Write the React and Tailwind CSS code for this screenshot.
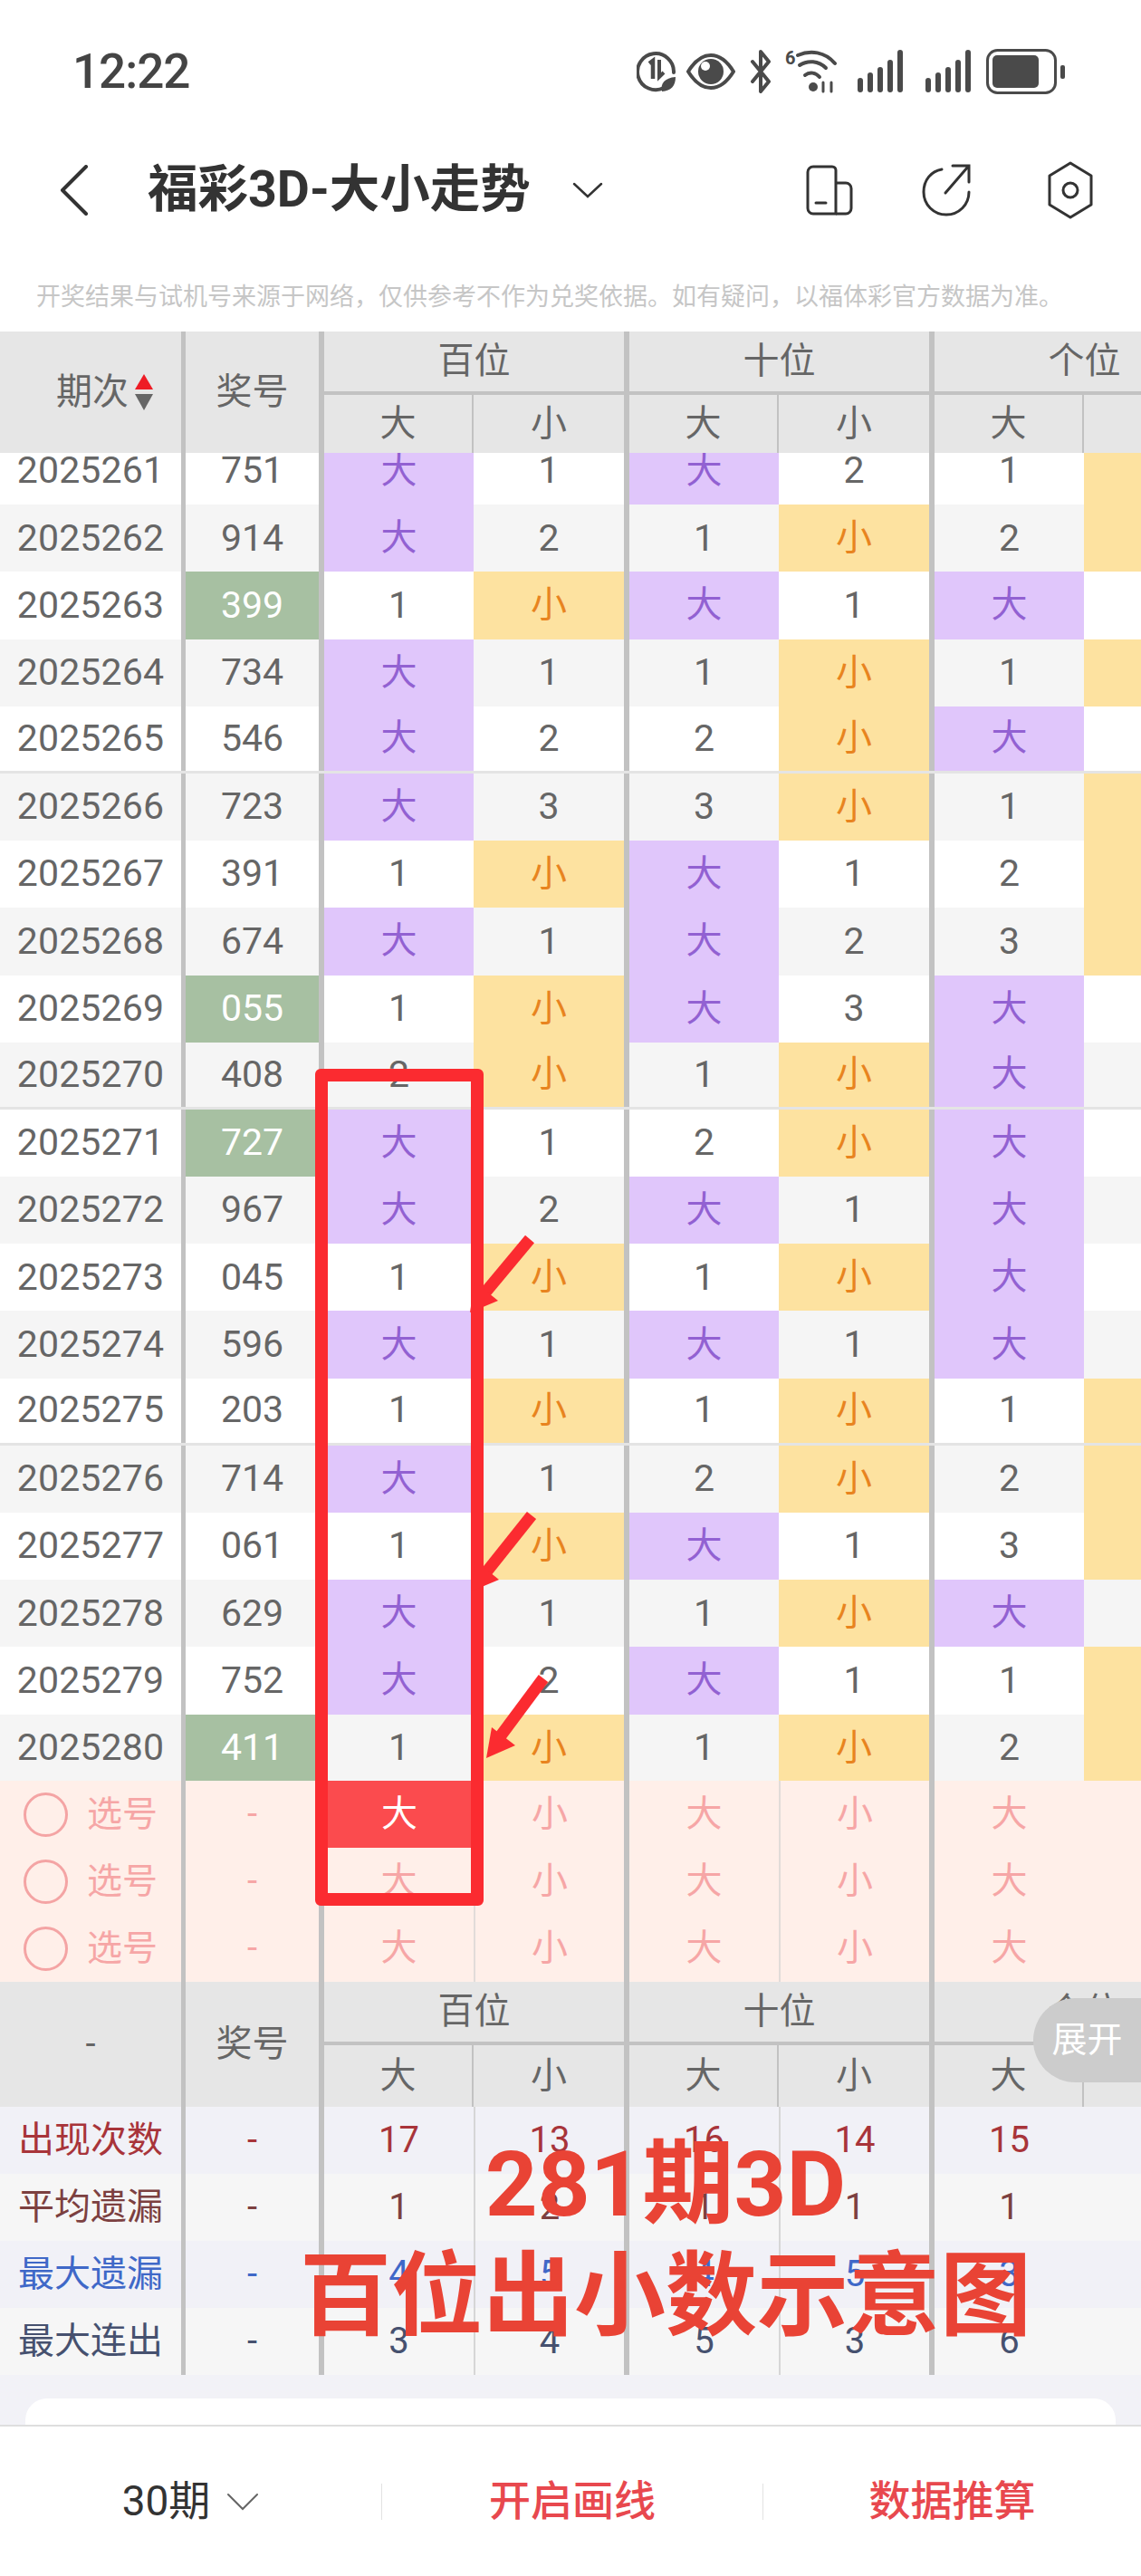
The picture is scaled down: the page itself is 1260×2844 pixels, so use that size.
const cjk = "font-['Roboto','Noto_Sans_CJK_SC',sans-serif]";

// big/small columns: number = miss count, "d" = 大, "x" = 小
const draws = [
  ["2025261", "751", 0, "d", 1, "d", 2, 1],
  ["2025262", "914", 0, "d", 2, 1, "x", 2],
  ["2025263", "399", 1, 1, "x", "d", 1, "d"],
  ["2025264", "734", 0, "d", 1, 1, "x", 1],
  ["2025265", "546", 0, "d", 2, 2, "x", "d"],
  ["2025266", "723", 0, "d", 3, 3, "x", 1],
  ["2025267", "391", 0, 1, "x", "d", 1, 2],
  ["2025268", "674", 0, "d", 1, "d", 2, 3],
  ["2025269", "055", 1, 1, "x", "d", 3, "d"],
  ["2025270", "408", 0, 2, "x", 1, "x", "d"],
  ["2025271", "727", 1, "d", 1, 2, "x", "d"],
  ["2025272", "967", 0, "d", 2, "d", 1, "d"],
  ["2025273", "045", 0, 1, "x", 1, "x", "d"],
  ["2025274", "596", 0, "d", 1, "d", 1, "d"],
  ["2025275", "203", 0, 1, "x", 1, "x", 1],
  ["2025276", "714", 0, "d", 1, 2, "x", 2],
  ["2025277", "061", 0, 1, "x", "d", 1, 3],
  ["2025278", "629", 0, "d", 1, 1, "x", "d"],
  ["2025279", "752", 0, "d", 2, "d", 1, 1],
  ["2025280", "411", 1, 1, "x", 1, "x", 2],
];

const stats = [
  ["出现次数", "text-[#a8343a]", "bg-[#f1f1f7]", [17, 13, 16, 14, 15]],
  ["平均遗漏", "text-[#7c4040]", "bg-[#f6f6f6]", [1, 2, 1, 1, 1]],
  ["最大遗漏", "text-[#3f68c8]", "bg-[#f1f1f7]", [4, 5, 4, 5, 3]],
  ["最大连出", "text-[#46516f]", "bg-[#f6f6f6]", [3, 4, 5, 3, 6]],
];

const widths = ["w-[165px]", "w-[166px]", "w-[165px]", "w-[166px]", "w-[165px]", "w-[63px]"];
const seps = [false, true, false, true, false, false];

const notice = "开奖结果与试机号来源于网络\uFF0C仅供参考不作为兑奖依据。如有疑问\uFF0C以福体彩官方数据为准。";

function StatusIcons() {
  return (
    <div className="flex items-center">
      <svg width="44" height="48" viewBox="0 0 44 48" fill="none" stroke="#4a4a4a" strokeWidth="4">
        <path d="M30 42A20 20 0 1 1 41 25" strokeLinecap="round" />
        <path d="M14 15l4-3v20" strokeWidth="4.5" />
        <path d="M25 11v19l5-5" strokeWidth="4" />
        <path d="M28 46c-2-9 3-15 15-16 0 10-5 15-15 16z" fill="#4a4a4a" stroke="none" />
      </svg>
      <svg className="ml-[11px]" width="54" height="42" viewBox="0 0 54 42">
        <path d="M2 21C10 8 18 3 27 3s17 5 25 18c-8 13-16 18-25 18S10 34 2 21z" fill="none" stroke="#4a4a4a" strokeWidth="4" />
        <circle cx="27" cy="21" r="14" fill="#4a4a4a" />
        <circle cx="21" cy="15" r="5" fill="#fff" />
      </svg>
      <svg className="ml-[16px]" width="25" height="48" viewBox="0 0 25 48" fill="none" stroke="#4a4a4a" strokeWidth="4" strokeLinejoin="round" strokeLinecap="round">
        <path d="M3 13l18 22-9 11V2l9 11L3 35" />
      </svg>
      <svg className="ml-[14px]" width="58" height="48" viewBox="0 0 58 48" fill="none" stroke="#4a4a4a" strokeWidth="4" strokeLinecap="round">
        <text x="0" y="16" fontSize="20" fontWeight="700" fill="#4a4a4a" stroke="none" fontFamily="Roboto">6</text>
        <path d="M14 6C28 0 44 2 55 15" />
        <path d="M16 17c9-6 21-5 29 3" />
        <path d="M22 28c5-4 12-3 16 2" />
        <circle cx="31" cy="41" r="5" fill="#4a4a4a" stroke="none" />
        <path d="M42 36v10M51 46V36" strokeWidth="3" />
      </svg>
      <svg className="ml-[21px]" width="52" height="48" viewBox="0 0 52 48" fill="none" stroke="#4a4a4a" strokeWidth="6" strokeLinecap="round">
        <path d="M4 34v10M15 28v16M26 22v22M37 14v30M48 3v41" />
      </svg>
      <svg className="ml-[23px]" width="52" height="48" viewBox="0 0 52 48" fill="none" stroke="#4a4a4a" strokeWidth="6" strokeLinecap="round">
        <path d="M4 34v10M15 28v16M26 22v22M37 14v30M48 3v41" />
      </svg>
      <svg className="ml-[16px]" width="87" height="50" viewBox="0 0 87 50">
        <rect x="1.5" y="1.5" width="75" height="47" rx="11" fill="none" stroke="#4a4a4a" strokeWidth="3" />
        <rect x="7" y="7" width="51" height="36" rx="5" fill="#4a4a4a" />
        <rect x="82" y="18" width="5" height="15" rx="2" fill="#4a4a4a" />
      </svg>
    </div>
  );
}

function NavIcons() {
  return (
    <div className="flex items-center">
      <svg width="52" height="56" viewBox="0 0 52 56" fill="none" stroke="#333" strokeWidth="3" strokeLinejoin="round">
        <path d="M8 2h21a4 4 0 0 1 4 4v48H8a6 6 0 0 1-6-6V8a6 6 0 0 1 6-6z" />
        <path d="M33 20h11a6 6 0 0 1 6 6v22a6 6 0 0 1-6 6H33" />
        <path d="M11 42h11" strokeLinecap="round" />
      </svg>
      <svg className="ml-[76px]" width="54" height="58" viewBox="0 0 54 58" fill="none" stroke="#333" strokeWidth="3" strokeLinecap="round">
        <path d="M22 6C10 8 2 18 2 31c0 14 11 25 25 25s25-11 25-25" />
        <path d="M26 32L51 3M34 2h18v18" />
      </svg>
      <svg className="ml-[84px]" width="52" height="64" viewBox="0 0 52 64" fill="none" stroke="#333" strokeWidth="3" strokeLinejoin="round">
        <path d="M26 2l23 14v32L26 62 3 48V16z" />
        <circle cx="26" cy="32" r="8" />
      </svg>
    </div>
  );
}

function Mark({ value }) {
  if (value === "d") return <span className={`text-[40px] text-[#9261d2] ${cjk}`}>大</span>;
  if (value === "x") return <span className={`text-[40px] text-[#e8841f] ${cjk}`}>小</span>;
  return <span>{value}</span>;
}

function cellBg(value, index, row) {
  if (value === "d") return "bg-[#e0c6fb]";
  if (value === "x") return "bg-[#fde2a0]";
  // last column is scrolled off, only its fill shows
  if (index === 5) return typeof row[7] === "number" ? "bg-[#fde2a0]" : "";
  return "";
}

function DrawRow({ row, index }) {
  const cells = [row[3], row[4], row[5], row[6], row[7], null];
  const striped = index % 2 === 1;
  const groupEnd = index % 5 === 4 && index !== 19;
  return (
    <div className={`flex h-[74.2px] text-[41px] text-[#666] ${striped ? "bg-[#f5f5f5]" : "bg-white"} ${groupEnd ? "border-b-[3px] border-[#e4e4e4]" : ""}`}>
      <div className="w-[200px] flex items-center justify-center tracking-[0.2px]">{row[0]}</div>
      <div className="w-[5px] bg-[#c2c2c2]" />
      <div className={`w-[147px] flex items-center justify-center ${row[2] ? "bg-[#a7c0a2] text-white" : ""}`}>{row[1]}</div>
      <div className="w-[6px] bg-[#c2c2c2]" />
      {cells.map((c, i) => (
        <div key={i} className="flex">
          <div className={`${widths[i]} flex items-center justify-center ${cellBg(c, i, row)}`}>
            {c !== null && <Mark value={c} />}
          </div>
          {seps[i] && <div className="w-[6px] bg-[#c2c2c2]" />}
        </div>
      ))}
    </div>
  );
}

function PickRow() {
  const cells = ["大", "小", "大", "小", "大", ""];
  return (
    <div className={`flex h-[74px] bg-[#ffefe9] text-[#f6a6a6] text-[40px] ${cjk}`}>
      <div className="w-[200px] flex items-center pl-[26px]">
        <div className="w-[49px] h-[49px] rounded-full border-[3px] border-[#f4a4a4]" />
        <span className="ml-[21px] text-[39px]">选号</span>
      </div>
      <div className="w-[5px] bg-[#c2c2c2]" />
      <div className="w-[147px] flex items-center justify-center">-</div>
      <div className="w-[6px] bg-[#c2c2c2]" />
      {cells.map((c, i) => (
        <div key={i} className="flex">
          <div className={`${widths[i]} flex items-center justify-center ${i % 2 === 1 && i < 5 ? "border-l-2 border-[#e2dcd9]" : ""}`}>{c}</div>
          {seps[i] && <div className="w-[6px] bg-[#c2c2c2]" />}
        </div>
      ))}
    </div>
  );
}

function HeaderGroups() {
  const groups = ["百位", "十位", "个位"];
  return (
    <div className="flex">
      {groups.map((g, i) => (
        <div key={g} className="flex">
          <div className="flex flex-col w-[331px]">
            <div className="h-[66px] flex items-center justify-center">{g}</div>
            <div className="h-[4px] bg-[#c2c2c2]" />
            <div className="flex flex-1">
              <div className="w-[165px] flex items-center justify-center border-r-2 border-[#c2c2c2]">大</div>
              <div className="w-[166px] flex items-center justify-center">{i === 2 ? "" : "小"}</div>
            </div>
          </div>
          <div className="w-[6px] bg-[#c2c2c2]" />
        </div>
      ))}
    </div>
  );
}

function TableHeader({ bottom }) {
  return (
    <div className={`flex bg-[#e6e6e6] text-[40px] text-[#666] overflow-hidden ${cjk} ${bottom ? "h-[138px]" : "h-[134px]"}`}>
      <div className="w-[200px] shrink-0 flex items-center justify-center">
        {bottom ? (
          "-"
        ) : (
          <div className="flex items-center ml-[32px]">
            <span>期次</span>
            <svg className="ml-[6px]" width="22" height="40" viewBox="0 0 22 40">
              <path d="M11 0l10 17H1z" fill="#ee1c25" />
              <path d="M1 22h20L11 40z" fill="#666" />
            </svg>
          </div>
        )}
      </div>
      <div className="w-[5px] shrink-0 bg-[#c2c2c2]" />
      <div className="w-[147px] shrink-0 flex items-center justify-center">奖号</div>
      <div className="w-[6px] shrink-0 bg-[#c2c2c2]" />
      <HeaderGroups />
    </div>
  );
}

function StatRow({ stat }) {
  const [label, color, bg, values] = stat;
  return (
    <div className={`flex h-[74px] text-[40px] ${color} ${bg} ${cjk}`}>
      <div className="w-[200px] flex items-center justify-center">{label}</div>
      <div className="w-[5px] bg-[#c2c2c2]" />
      <div className="w-[147px] flex items-center justify-center">-</div>
      <div className="w-[6px] bg-[#c2c2c2]" />
      {[...values, ""].map((v, i) => (
        <div key={i} className="flex">
          <div className={`${widths[i]} flex items-center justify-center ${i % 2 === 1 && i < 5 ? "border-l-2 border-[#d6d6d6]" : ""}`}>{v}</div>
          {seps[i] && <div className="w-[6px] bg-[#c2c2c2]" />}
        </div>
      ))}
    </div>
  );
}

export default function App() {
  return (
    <div className={`relative w-[1260px] h-[2844px] overflow-hidden bg-[#f2f2f7] ${cjk}`}>
      {/* status bar */}
      <div className="bg-white h-[158px] flex items-center justify-between pl-[80px] pr-[84px]">
        <span className="text-[53px] tracking-[-1px] font-medium text-[#444] leading-none">12:22</span>
        <StatusIcons />
      </div>

      {/* title bar */}
      <div className="bg-white h-[104px] flex items-center justify-between pr-[52px]">
        <div className="flex items-center">
          <svg className="ml-[66px]" width="32" height="56" viewBox="0 0 32 56" fill="none" stroke="#333" strokeWidth="4" strokeLinecap="round" strokeLinejoin="round">
            <path d="M29 2L3 28l26 26" />
          </svg>
          <span className="ml-[65px] text-[55.5px] font-bold text-[#333] whitespace-nowrap">福彩3D-大小走势</span>
          <svg className="ml-[46px]" width="34" height="18" viewBox="0 0 34 18" fill="none" stroke="#333" strokeWidth="2.5" strokeLinecap="round">
            <path d="M2 2l15 14L32 2" />
          </svg>
        </div>
        <NavIcons />
      </div>

      {/* disclaimer */}
      <div className="bg-white h-[104px] pt-[28px] pl-[40px] flex items-center text-[27px] text-[#c6c6c6] whitespace-nowrap">
        {notice}
      </div>

      <TableHeader />

      <div className="h-[1466px] overflow-hidden font-['Roboto',sans-serif]">
        <div className="mt-[-17px]">
          {draws.map((row, i) => (
            <DrawRow key={row[0]} row={row} index={i} />
          ))}
        </div>
      </div>

      <PickRow />
      <PickRow />
      <PickRow />

      <TableHeader bottom />

      {stats.map((s) => (
        <StatRow key={s[0]} stat={s} />
      ))}

      <div className="mx-[28px] mt-[26px] h-[40px] bg-white rounded-t-[24px]" />

      {/* bottom bar */}
      <div className="absolute left-0 right-0 bottom-0 h-[167px] bg-white border-t-2 border-[#dedede] flex items-center">
        <div className="w-[421px] flex items-center justify-center text-[46px] text-[#333]">
          <span>30期</span>
          <svg className="ml-[18px]" width="36" height="20" viewBox="0 0 36 20" fill="none" stroke="#666" strokeWidth="2" strokeLinecap="round">
            <path d="M2 2l16 16L34 2" />
          </svg>
        </div>
        <div className="w-[1px] h-[40px] bg-[#e2e2e2]" />
        <div className="w-[420px] flex items-center justify-center text-[46px] font-medium text-[#e8484e]">开启画线</div>
        <div className="w-[1px] h-[40px] bg-[#e2e2e2]" />
        <div className="flex-1 flex items-center justify-center text-[46px] font-medium text-[#e8484e]">数据推算</div>
      </div>

      {/* 展开 tab */}
      <div className="absolute right-0 top-[2206px] w-[119px] h-[93px] rounded-l-full bg-[#cccccc] flex items-center justify-center text-[39px] text-white">展开</div>

      {/* selected-number highlight */}
      <div className="absolute left-[348px] top-[1966px] w-[186px] h-[74px] px-[14px]">
        <div className="w-full h-full bg-[#fb4b4e] flex items-center justify-center text-[40px] text-white">大</div>
      </div>

      {/* hand-drawn annotation on the screenshot */}
      <div className="absolute left-[348px] top-[1180px] w-[186px] h-[924px] border-[14px] border-[#fb2b30] rounded-[6px]" />
      <svg className="absolute left-0 top-0 pointer-events-none" width="1260" height="2844" viewBox="0 0 1260 2844">
        <g stroke="#fb2b30" strokeWidth="13" fill="#fb2b30">
          <path d="M585 1368L530 1434" />
          <path d="M519 1449l5-34 26 21z" stroke="none" />
          <path d="M587 1673L532 1742" />
          <path d="M520 1757l5-34 26 21z" stroke="none" />
          <path d="M600 1853L548 1923" />
          <path d="M537 1941l6-34 26 20z" stroke="none" />
        </g>
      </svg>

      {/* caption on top */}
      <div className="absolute left-0 top-[2350px] w-[1260px] pl-[210px] flex flex-col items-center text-[101px] leading-[124px] font-bold text-[#e94335] pointer-events-none">
        <div>281期3D</div>
        <div>百位出小数示意图</div>
      </div>
    </div>
  );
}
